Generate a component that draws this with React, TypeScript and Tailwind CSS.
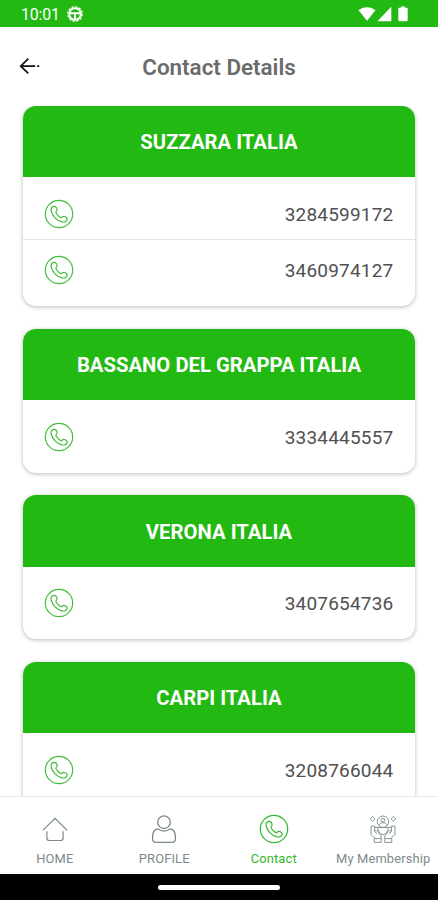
import type { ReactNode } from "react";

type Location = { name: string; phones: string[] };

const locations: Location[] = [
    { name: "SUZZARA ITALIA", phones: ["3284599172", "3460974127"] },
    { name: "BASSANO DEL GRAPPA ITALIA", phones: ["3334445557"] },
    { name: "VERONA ITALIA", phones: ["3407654736"] },
    { name: "CARPI ITALIA", phones: ["3208766044"] },
];

const PhoneIcon = ({ className }: { className?: string }) => (
    <svg viewBox="0 0 30 30" fill="none" stroke="currentColor" strokeLinejoin="round" className={className}>
        <circle cx="15" cy="15" r="13.7" strokeWidth="1.2" />
        <path
            d="M9.8 7.4C7.6 8 6.7 9.7 7.2 12C8.3 17 12.8 21.6 17.8 22.8C20.2 23.3 22.5 22.5 23.1 20.6C23.5 19.2 22.6 18.4 21.3 17.8C19.8 17.1 18.8 17.4 18.1 18.3C17.5 19 16.7 18.7 15.9 18.1C14.3 17 13 15.5 12.1 14C11.7 13.3 11.8 12.7 12.5 12.1C13.4 11.3 13.3 10.3 12.8 9.2C12.2 7.8 11.2 7 9.8 7.4Z"
            strokeWidth="1.2"
        />
    </svg>
);

const HomeIcon = () => (
    <svg viewBox="0 0 30 30" fill="none" stroke="currentColor" strokeWidth="1.2" strokeLinecap="round" className="size-[30px]">
        <path d="M3.3 15.9 15 4.4l11.7 11.5M6.9 17.7v6.2c0 1.7.9 2.6 2.6 2.6h11c1.7 0 2.6-.9 2.6-2.6v-6.2" />
    </svg>
);

const ProfileIcon = () => (
    <svg viewBox="0 0 30 30" fill="none" stroke="currentColor" strokeWidth="1.3" strokeLinejoin="round" className="size-[30px]">
        <circle cx="15" cy="8.2" r="6.3" />
        <path d="M9 14.9c-3.6.4-5.4 3.6-5.4 8.4v1.8c0 2.2 1.2 3.3 3.4 3.3h16c2.2 0 3.4-1.1 3.4-3.3v-1.8c0-4.8-1.8-8-5.4-8.4-1.6 1.5-3.6 2.2-6 2.2s-4.4-.7-6-2.2Z" />
    </svg>
);

const MembershipIcon = () => (
    <svg viewBox="0 0 30 30" fill="none" stroke="currentColor" strokeWidth=".9" strokeLinejoin="round" className="size-[30px]">
        {/* member with a sparkle on each side */}
        <circle cx="15" cy="7.7" r="5.7" />
        <circle cx="15" cy="6.2" r="2" />
        <path d="M11 11.6c.7-3.9 7.3-3.9 8 0M4.6 2.4l2.3 2.4-2.3 2.4-2.4-2.4ZM25.4 2.4l2.4 2.4-2.4 2.4-2.3-2.4Z" />
        {/* cupped hands */}
        <path d="M6.6 13.4h16.8M6.6 13.4v-1.2H3v8.2l4.2 4.2M23.4 13.4v-1.2H27v8.2l-4.2 4.2M6.6 13.4v4.2l2.7 2.1M23.4 13.4v4.2l-2.7 2.1M6.6 17.2c1.6-1.3 3-.3 3.6.8l3 4v2.6M23.4 17.2c-1.6-1.3-3-.3-3.6.8l-3 4v2.6M6.2 24.6h7v3.8h-7ZM16.8 24.6h7v3.8h-7ZM9.5 13.4c.4 3.8 2.2 6.2 5.5 7.5 3.3-1.3 5.1-3.7 5.5-7.5" />
    </svg>
);

const StatusBar = () => (
    <div className="flex h-[27px] shrink-0 items-center bg-[#22b912] pr-[30px] pl-[21px] text-white">
        <span className="pt-[2px] text-[15.8px] leading-none tracking-[-0.1px]">10:01</span>
        <svg viewBox="0 0 16 16" className="ml-[7px] size-4">
            <circle cx="8" cy="8" r="5.8" fill="none" stroke="currentColor" strokeWidth="2" />
            <circle cx="8" cy="8" r="7.2" fill="none" stroke="currentColor" strokeWidth="1.3" strokeDasharray="2.4 1.37" />
            <path d="M3 7.2h10M8 8v5" stroke="currentColor" strokeWidth="2" />
        </svg>
        <svg viewBox="0 0 18 16" fill="currentColor" className="ml-auto h-4 w-[18px]">
            <path d="M.5 4.3C5.3.1 12.7.1 17.5 4.3L9 14.8Z" />
        </svg>
        <svg viewBox="0 0 15 16" fill="currentColor" className="ml-px h-4 w-[15px]">
            <path d="M14.3.8v14.4H.4Z" />
        </svg>
        <svg viewBox="0 0 10 16" fill="currentColor" className="ml-[6px] h-4 w-[10px]">
            <path d="M3 .4h4v1.4h1.5c.7 0 1.2.5 1.2 1.2v11c0 .8-.5 1.3-1.2 1.3h-7C.8 15.3.3 14.8.3 14V3c0-.7.5-1.2 1.2-1.2H3Z" />
        </svg>
    </div>
);

const LocationCard = ({ location }: { location: Location }) => (
    <section className="shrink-0 overflow-hidden rounded-[13px] bg-white shadow-[0_1px_4px_rgba(0,0,0,0.28)]">
        <h2 className="flex h-[71.3px] items-center justify-center bg-[#22b912] pt-[2px] text-[20.3px] font-bold text-white">
            {location.name}
        </h2>
        <div className="py-[11px]">
            {location.phones.map((phone, i) => (
                <div key={phone} className={i > 0 ? "border-t border-[#e2e2e2] pt-[5px]" : ""}>
                    <div className="flex h-[50.5px] items-center justify-between pr-[21.5px] pl-[21px]">
                        <PhoneIcon className="size-[30px] text-[#43bd3a]" />
                        <span className="pt-[3px] text-[19px] tracking-[0.2px] text-[#505050]">{phone}</span>
                    </div>
                </div>
            ))}
        </div>
    </section>
);

const NavItem = ({ label, active, children }: { label: string; active?: boolean; children: ReactNode }) => (
    <div
        className={`flex flex-1 flex-col items-center whitespace-nowrap pt-[17px] ${active ? "text-[#32b82a]" : "text-[#7c8a8b]"}`}
    >
        {children}
        <span className="mt-[5.5px] text-[12.9px] leading-[18px] tracking-[0.15px]">{label}</span>
    </div>
);

export default function App() {
    return (
        <div className="flex h-[900px] w-[438px] flex-col overflow-hidden bg-white font-[Roboto,sans-serif]">
            <StatusBar />
            <header className="relative flex h-[79px] shrink-0 items-center justify-center">
                <svg
                    viewBox="0 0 22 18"
                    fill="none"
                    stroke="#111"
                    strokeWidth="1.7"
                    className="absolute top-[30px] left-[19px] h-[18px] w-[22px]"
                >
                    <path d="M9.3 1.6 1.7 9.2l7.6 7.2M1.7 9.2h14.5M18.2 9.2h2" />
                </svg>
                <h1 className="pt-[2px] text-[22.4px] font-semibold text-[#6b6b6b]">Contact Details</h1>
            </header>
            <main className="flex min-h-0 flex-1 flex-col gap-[22.7px] overflow-hidden px-[23px]">
                {locations.map(l => (
                    <LocationCard key={l.name} location={l} />
                ))}
            </main>
            <nav className="flex h-[78px] shrink-0 border-t border-[#ececec]">
                <NavItem label="HOME">
                    <HomeIcon />
                </NavItem>
                <NavItem label="PROFILE">
                    <ProfileIcon />
                </NavItem>
                <NavItem label="Contact" active>
                    <PhoneIcon className="size-[30px]" />
                </NavItem>
                <NavItem label="My Membership">
                    <MembershipIcon />
                </NavItem>
            </nav>
            <div className="flex h-[26px] shrink-0 items-center justify-center bg-black">
                <div className="h-[5px] w-[122px] rounded-full bg-white" />
            </div>
        </div>
    );
}
